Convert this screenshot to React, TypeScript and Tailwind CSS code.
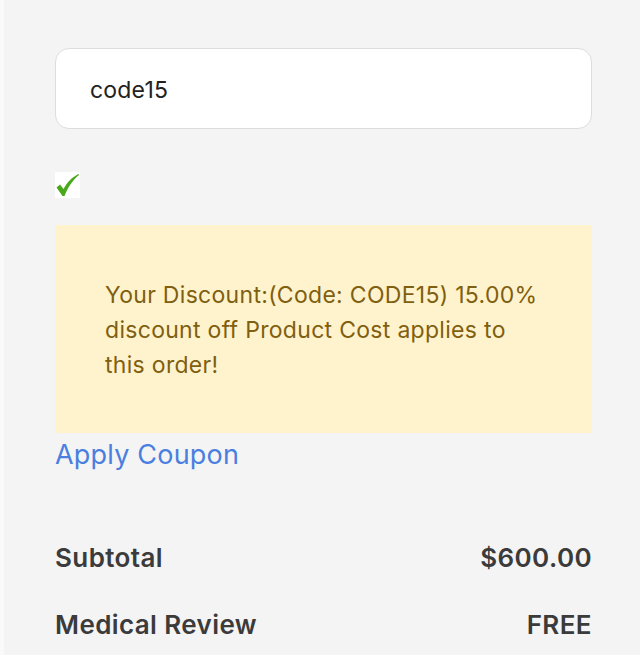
export default function App() {
  return (
    <div
      className="flex h-[655px] w-[640px] overflow-hidden bg-[#f4f4f4]"
      style={{ fontFamily: 'Inter, "Noto Sans", sans-serif' }}
    >
      <div className="w-[4px] shrink-0 bg-[#fafafa]" />
      <div className="flex w-[537px] flex-col pl-[51px] pt-[48px] box-content">
        <div className="flex h-[81px] items-center rounded-[14px] border border-[#dddddd] bg-white pl-[34px] pt-[3px] text-[23px] tracking-[0.2px] text-[#222]">
          code15
        </div>

        <div className="mt-[43px] flex h-[26px] w-[25px] items-center justify-center bg-white">
          <svg viewBox="0 0 25 26" className="h-[26px] w-[25px]">
            <path
              d="M1.5 15.5 L5 12.5 L8.5 17 C12 10.5 16.5 5.5 23.5 2 L24 3 C17.5 8.5 13 15 9.5 24 L7.5 24 Z"
              fill="#4aa81b"
            />
          </svg>
        </div>

        <div className="mt-[27px] h-[208px] bg-[#fff3cd] pl-[50px] pr-[48px] pt-[53px] text-[23px] leading-[35px] tracking-[0.3px] text-[#7f5f10]">
          Your Discount:(Code: CODE15) 15.00% discount off Product Cost applies to this order!
        </div>

        <a className="mt-[2px] text-[27px] leading-[40px] tracking-[0.2px] text-[#4a7fe0]">Apply Coupon</a>

        <div className="mt-[63px] flex flex-col gap-[27px] text-[26px] font-semibold leading-[40px] tracking-[0.4px] text-[#3b3b3b]">
          <div className="flex justify-between">
            <span>Subtotal</span>
            <span>$600.00</span>
          </div>
          <div className="flex justify-between">
            <span>Medical Review</span>
            <span>FREE</span>
          </div>
        </div>
      </div>
    </div>
  );
}
